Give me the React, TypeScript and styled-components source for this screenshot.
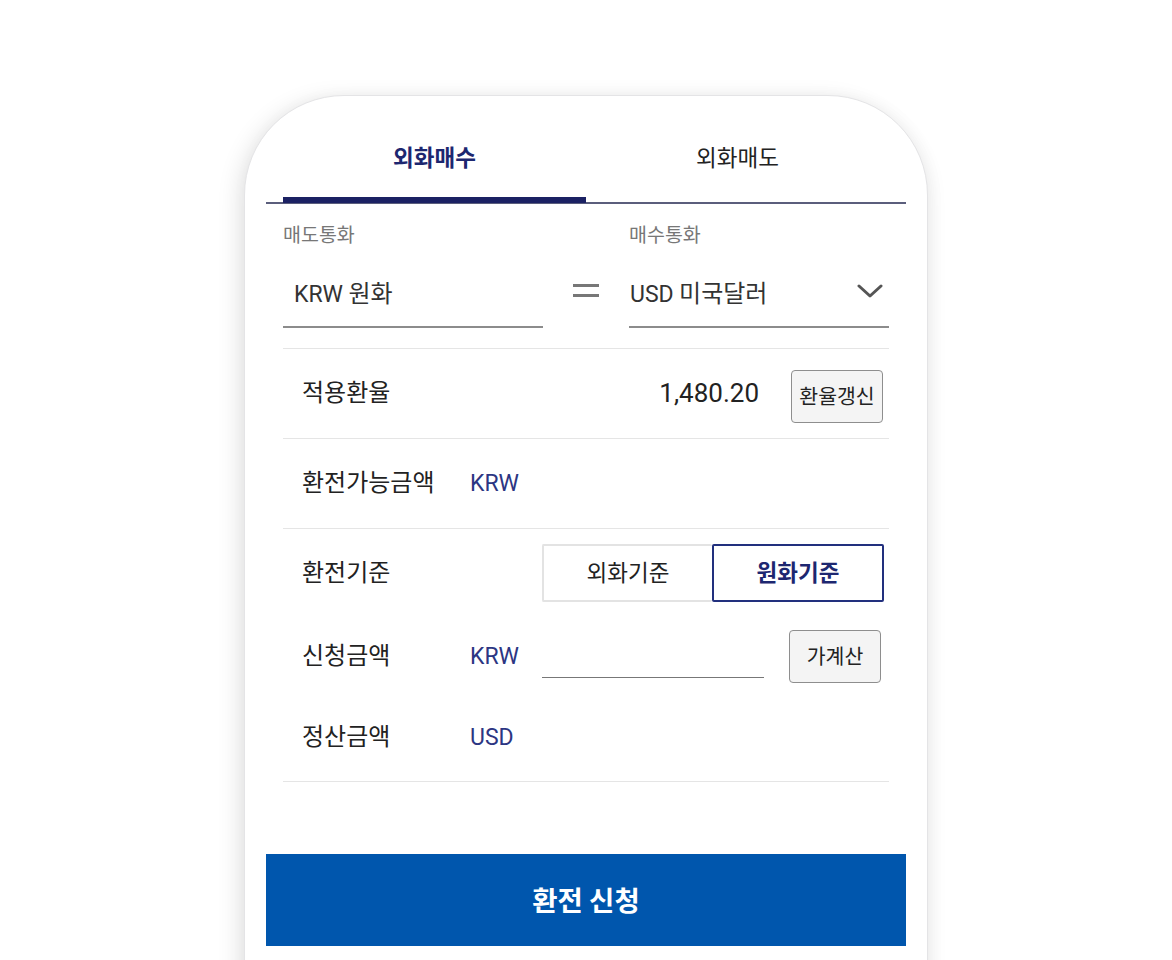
import React from "react";
import styled, { createGlobalStyle } from "styled-components";

const Global = createGlobalStyle`
  html, body { margin: 0; padding: 0; background: #ffffff; }
  body { font-family: "Noto Sans CJK KR", "Noto Sans", sans-serif; color: #222; }
  * { box-sizing: border-box; }
`;

const Page = styled.div`
  width: 1172px;
  height: 960px;
  overflow: hidden;
  padding-top: 95px;
  background: #ffffff;
`;

const Card = styled.div`
  width: 684px;
  height: 940px;
  margin: 0 auto;
  background: #ffffff;
  border: 1px solid #e4e4e6;
  border-radius: 100px 100px 0 0;
  box-shadow: -6px 4px 22px rgba(0, 0, 0, 0.1), 4px 4px 18px rgba(0, 0, 0, 0.05);
  padding: 0 21px;
`;

const TabBar = styled.div`
  display: flex;
  padding: 0 17px;
  border-bottom: 2px solid #5b5e7c;
`;

const Tab = styled.div<{ $active?: boolean }>`
  flex: 1;
  height: 107px;
  padding-top: 18px;
  display: flex;
  align-items: center;
  justify-content: center;
  font-size: 22.5px;
  font-weight: ${(p) => (p.$active ? 700 : 400)};
  color: ${(p) => (p.$active ? "#1d2770" : "#222")};
  border-bottom: 6px solid ${(p) => (p.$active ? "#1b2163" : "transparent")};
  margin-bottom: -1px;
`;

const Form = styled.div`
  padding: 17px 17px 0;
`;

const CurrencyGrid = styled.div`
  display: grid;
  grid-template-columns: 260px 1fr 260px;
  align-items: end;
`;

const FieldBlock = styled.div`
  display: flex;
  flex-direction: column;
`;

const FieldLabel = styled.div`
  font-size: 19.5px;
  line-height: 26px;
  color: #777;
  margin-bottom: 14px;
`;

const FieldValue = styled.div`
  height: 67px;
  display: flex;
  align-items: center;
  justify-content: space-between;
  padding-left: 11px;
  padding-right: 6px;
  padding-bottom: 5px;
  border-bottom: 2px solid #8c8c8c;
  font-size: 24px;
  color: #333;
`;

const SelectValue = styled(FieldValue)`
  padding-left: 1px;
`;

const Latin = styled.span<{ $size?: number }>`
  font-family: Roboto, "Noto Sans CJK KR", sans-serif;
  font-size: ${(p) => p.$size ?? 24}px;
`;

const Equals = styled.div`
  height: 67px;
  display: flex;
  align-items: center;
  justify-content: center;
  margin-bottom: 2px;
  padding-bottom: 3px;
`;

const List = styled.div`
  margin-top: 20px;
  border-top: 1px solid #e5e5e5;
`;

const InfoRow = styled.div`
  height: 90px;
  display: flex;
  align-items: center;
  padding: 0 6px 0 19px;
  border-bottom: 1px solid #e5e5e5;
`;

const RowLabel = styled.div`
  width: 168px;
  flex-shrink: 0;
  font-size: 24px;
  color: #222;
  white-space: nowrap;
  padding-bottom: 6px;
`;

const Code = styled.div`
  width: 72px;
  flex-shrink: 0;
  font-family: Roboto, "Noto Sans CJK KR", sans-serif;
  font-size: 23px;
  color: #2c3683;
`;

const Rate = styled.div`
  margin-left: auto;
  font-family: Roboto, sans-serif;
  font-size: 26px;
  color: #222;
  margin-right: 32px;
  padding-bottom: 2px;
`;

const SmallButton = styled.button<{ $shift?: number }>`
  width: 92px;
  height: 53px;
  flex-shrink: 0;
  margin-top: ${(p) => p.$shift ?? 0}px;
  background: #f4f4f4;
  border: 1px solid #8e8e8e;
  border-radius: 4px;
  font-family: "Noto Sans CJK KR", sans-serif;
  font-size: 20.5px;
  color: #222;
  padding: 0 0 3px;
`;

const Group = styled.div`
  display: flex;
  flex-direction: column;
  gap: 28px;
  padding: 15px 0 17px;
  border-bottom: 1px solid #e5e5e5;
`;

const GroupRow = styled.div<{ $h: number }>`
  height: ${(p) => p.$h}px;
  display: flex;
  align-items: center;
  padding: 0 5px 0 19px;
`;

const Toggle = styled.div`
  flex: 1;
  height: 58px;
  display: flex;
  margin-left: 72px;
`;

const ToggleOption = styled.div<{ $active?: boolean }>`
  flex: 1;
  display: flex;
  align-items: center;
  justify-content: center;
  font-size: 22.5px;
  font-weight: ${(p) => (p.$active ? 700 : 400)};
  color: ${(p) => (p.$active ? "#1d2770" : "#222")};
  border: ${(p) => (p.$active ? "2px solid #22307e" : "2px solid #e3e3e3")};
  ${(p) => (p.$active ? "" : "border-right: none;")}
  border-radius: 2px;
  padding-bottom: 4px;
`;

const AmountInput = styled.div`
  width: 222px;
  height: 48px;
  border-bottom: 1px solid #777;
  align-self: flex-start;
  margin-right: 25px;
`;

const SubmitButton = styled.button`
  display: block;
  width: 100%;
  height: 92px;
  margin-top: 72px;
  border: none;
  background: #0056ad;
  color: #ffffff;
  font-family: "Noto Sans CJK KR", sans-serif;
  font-size: 27.5px;
  font-weight: 700;
  padding-bottom: 4px;
`;

const EqualsIcon = () => (
  <svg width="28" height="20" viewBox="0 0 28 20">
    <rect x="1" y="3" width="26" height="3" fill="#777" />
    <rect x="1" y="13" width="26" height="3" fill="#777" />
  </svg>
);

const Chevron = () => (
  <svg width="26" height="16" viewBox="0 0 26 16">
    <path d="M2 3 L13 13 L24 3" fill="none" stroke="#555" strokeWidth="3" strokeLinecap="round" strokeLinejoin="round" />
  </svg>
);

export default function App() {
  return (
    <>
      <Global />
      <Page>
        <Card>
          <TabBar>
            <Tab $active>외화매수</Tab>
            <Tab>외화매도</Tab>
          </TabBar>
          <Form>
            <CurrencyGrid>
              <FieldBlock>
                <FieldLabel>매도통화</FieldLabel>
                <FieldValue>
                  <span>
                    <Latin $size={23}>KRW</Latin> 원화
                  </span>
                </FieldValue>
              </FieldBlock>
              <Equals>
                <EqualsIcon />
              </Equals>
              <FieldBlock>
                <FieldLabel>매수통화</FieldLabel>
                <SelectValue>
                  <span>
                    <Latin $size={23}>USD</Latin> 미국달러
                  </span>
                  <Chevron />
                </SelectValue>
              </FieldBlock>
            </CurrencyGrid>
            <List>
              <InfoRow>
                <RowLabel>적용환율</RowLabel>
                <Rate>1,480.20</Rate>
                <SmallButton $shift={5}>환율갱신</SmallButton>
              </InfoRow>
              <InfoRow>
                <RowLabel>환전가능금액</RowLabel>
                <Code>KRW</Code>
              </InfoRow>
              <Group>
                <GroupRow $h={58}>
                  <RowLabel>환전기준</RowLabel>
                  <Toggle>
                    <ToggleOption>외화기준</ToggleOption>
                    <ToggleOption $active>원화기준</ToggleOption>
                  </Toggle>
                </GroupRow>
                <GroupRow $h={53}>
                  <RowLabel>신청금액</RowLabel>
                  <Code>KRW</Code>
                  <AmountInput />
                  <SmallButton>가계산</SmallButton>
                </GroupRow>
                <GroupRow $h={53}>
                  <RowLabel>정산금액</RowLabel>
                  <Code>USD</Code>
                </GroupRow>
              </Group>
            </List>
          </Form>
          <SubmitButton>환전 신청</SubmitButton>
        </Card>
      </Page>
    </>
  );
}
